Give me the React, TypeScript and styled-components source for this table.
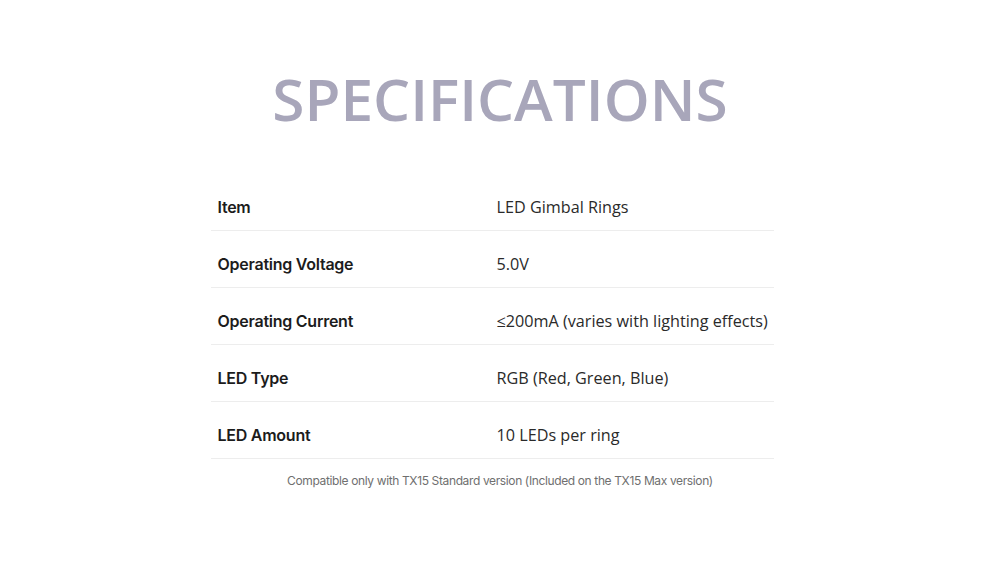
import React from "react";
import styled, { createGlobalStyle } from "styled-components";

const Global = createGlobalStyle`
  html, body { margin: 0; padding: 0; background: #ffffff; }
  body { font-family: "Open Sans", sans-serif; }
`;

const Page = styled.div`
  width: 1000px;
  height: 566px;
  display: flex;
  flex-direction: column;
  align-items: center;
  background: #fff;
`;

const Title = styled.h1`
  margin: 69px 0 0;
  font-family: "Open Sans", sans-serif;
  font-weight: 600;
  font-size: 58.5px;
  line-height: 1;
  color: #a8a6ba;
  letter-spacing: 0;
`;

const Table = styled.div`
  margin: 46px 16px 0 0;
  width: 563px;
  display: flex;
  flex-direction: column;
`;

const Row = styled.div`
  display: grid;
  grid-template-columns: 279px 1fr;
  height: 57px;
  box-sizing: border-box;
  padding: 22px 0 0 7px;
  border-bottom: 1px solid #ededed;
`;

const Label = styled.div`
  font-family: Inter, sans-serif;
  font-weight: 600;
  font-size: 16px;
  line-height: 22px;
  color: #1c1c1c;
  letter-spacing: -0.25px;
`;

const Value = styled.div`
  font-family: "Open Sans", sans-serif;
  font-size: 16.2px;
  line-height: 22px;
  color: #2a2a2a;
`;

const Note = styled.p`
  margin: 14px 0 0;
  font-family: Inter, sans-serif;
  font-size: 12px;
  line-height: 16px;
  color: #6f6f6f;
  letter-spacing: -0.37px;
`;

const rows: [string, string][] = [
  ["Item", "LED Gimbal Rings"],
  ["Operating Voltage", "5.0V"],
  ["Operating Current", "≤200mA (varies with lighting effects)"],
  ["LED Type", "RGB (Red, Green, Blue)"],
  ["LED Amount", "10 LEDs per ring"],
];

export default function App() {
  return (
    <Page>
      <Global />
      <Title>SPECIFICATIONS</Title>
      <Table>
        {rows.map(([k, v]) => (
          <Row key={k}>
            <Label>{k}</Label>
            <Value>{v}</Value>
          </Row>
        ))}
      </Table>
      <Note>Compatible only with TX15 Standard version (Included on the TX15 Max version)</Note>
    </Page>
  );
}
